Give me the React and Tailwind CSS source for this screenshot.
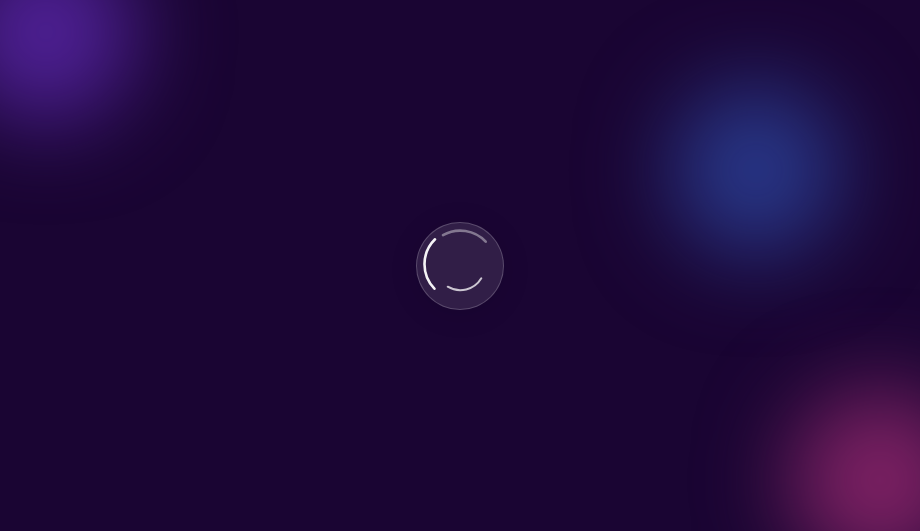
export default function App() {
  return (
    <div className="relative flex h-screen w-full items-center justify-center overflow-hidden bg-[#1a0533]">
      <div className="absolute left-[-44px] top-[-58px] h-[180px] w-[180px] rounded-full bg-[#4f2196] blur-[45px]" />
      <div className="absolute left-[671px] top-[85px] h-[170px] w-[170px] rounded-full bg-[#28388a] blur-[45px]" />
      <div className="absolute left-[790px] top-[390px] h-[180px] w-[180px] rounded-full bg-[#7f2264] blur-[45px]" />
      <div className="relative flex h-[88px] w-[88px] items-center justify-center rounded-full border border-white/20 bg-white/10 shadow-[0_4px_30px_rgba(0,0,0,0.1)]">
        <svg viewBox="0 0 88 88" className="absolute left-[-1px] top-[-1px] h-[88px] w-[88px]" fill="none" strokeLinecap="round">
          <path d="M19 17.3A35 35 0 0 0 18.4 66.7" stroke="#ffffff" strokeOpacity="0.95" strokeWidth="2.6" />
          <path d="M27 13.2A35 35 0 0 1 69.7 19.7" stroke="#ffffff" strokeOpacity="0.4" strokeWidth="2.6" />
          <path d="M31.7 64.7A24.5 24.5 0 0 0 65.3 56.3" stroke="#ffffff" strokeOpacity="0.75" strokeWidth="2" />
        </svg>
      </div>
    </div>
  );
}
